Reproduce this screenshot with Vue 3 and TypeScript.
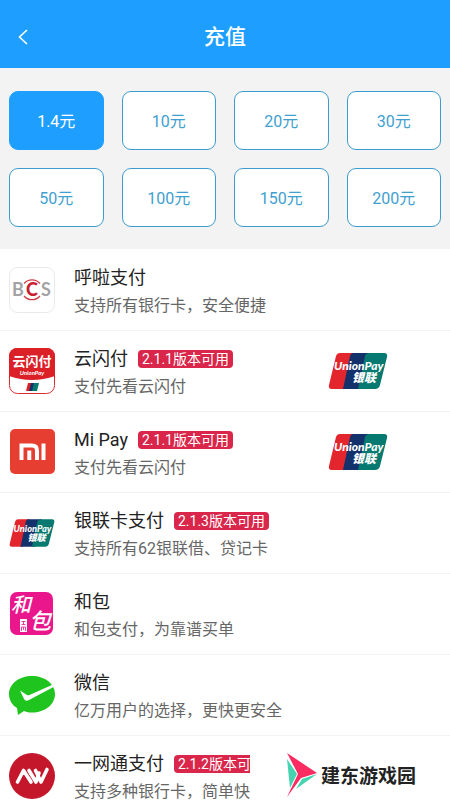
<script setup lang="ts">
import { h, ref } from 'vue'

interface Method {
  id: string
  name: string
  note: string
  badge?: string
  union?: boolean
}

const amounts: string[] = ['1.4', '10', '20', '30', '50', '100', '150', '200']
const selected = ref<string>('1.4')

const methods: Method[] = [
  { id: 'bcs', name: '呼啦支付', note: '支持所有银行卡，安全便捷' },
  { id: 'quick', name: '云闪付', note: '支付先看云闪付', badge: '2.1.1版本可用', union: true },
  { id: 'mi', name: 'Mi Pay', note: '支付先看云闪付', badge: '2.1.1版本可用', union: true },
  { id: 'union', name: '银联卡支付', note: '支持所有62银联借、贷记卡', badge: '2.1.3版本可用' },
  { id: 'hebao', name: '和包', note: '和包支付，为靠谱买单' },
  { id: 'wechat', name: '微信', note: '亿万用户的选择，更快更安全' },
  { id: 'cmb', name: '一网通支付', note: '支持多种银行卡，简单快捷', badge: '2.1.2版本可用' },
]

// Card-network logo, used both as a row icon and as the larger mark on the right.
const UnionLogo = () => {
  const label = { fill: '#fff', 'font-size': 12, 'font-weight': 900, 'font-style': 'italic' }
  return h('svg', { viewBox: '0 0 60 38' }, [
    h('path', { d: 'M12 1h15L18 37H4q-4 0-3-4L8 4q1-3 4-3z', fill: '#e3262d' }),
    h('path', { d: 'M25 1h18L34 37H15L22 4q1-3 3-3z', fill: '#13326b' }),
    h('path', { d: 'M41 1h15q4 0 3 4l-7 28q-1 4-5 4H30l7-33q1-3 4-3z', fill: '#067a70' }),
    h('text', { ...label, x: 6, y: 18, 'font-family': 'Lato, sans-serif' }, 'UnionPay'),
    h('text', { ...label, x: 24, y: 30, 'font-family': "'Noto Sans CJK SC', sans-serif" }, '银联'),
  ])
}
</script>

<template>
  <div class="screen">
    <header class="bar">
      <button class="back" type="button" aria-label="返回">
        <svg width="12" height="18" viewBox="0 0 12 18"><path d="M10 2L2.500 9L10 16" fill="none" stroke="#fff" stroke-width="1.600" /></svg>
      </button>
      <h1>充值</h1>
    </header>

    <section class="amounts">
      <button
        v-for="a in amounts"
        :key="a"
        type="button"
        class="amount"
        :class="{ active: a === selected }"
        @click="selected = a"
      >{{ a }}元</button>
    </section>

    <ul class="methods">
      <li v-for="m in methods" :key="m.id" class="method">
        <svg v-if="m.id === 'bcs'" class="icon" viewBox="0 0 46 46">
          <rect x="0.500" y="0.500" width="45" height="45" rx="8" fill="#fff" stroke="#e9e9e9" />
          <g font-family="Lato, sans-serif" font-weight="900" font-size="18" text-anchor="middle">
            <text x="9" y="29" fill="#a3a3a5" font-weight="700">B</text>
            <text x="23" y="29" fill="#c8202f">C</text>
            <text x="37" y="29" fill="#a3a3a5" font-weight="700">S</text>
          </g>
          <path d="M15 16.500a10.500 10.500 0 0 1 16 0M15 29a10.500 10.500 0 0 0 16 0" fill="none" stroke="#cf3d48" stroke-width="1.300" />
        </svg>
        <svg v-else-if="m.id === 'quick'" class="icon" viewBox="0 0 46 46">
          <rect x="0.500" y="0.500" width="45" height="45" rx="8" fill="#fff" stroke="#d82a30" />
          <path d="M0 8a8 8 0 0 1 8-8h30a8 8 0 0 1 8 8v20Q23 36 0 28z" fill="#dc2027" />
          <text x="23" y="18" fill="#fff" font-size="13" font-weight="700" text-anchor="middle" font-family="'Noto Sans CJK SC', sans-serif">云闪付</text>
          <text x="23" y="27" fill="#fff" font-size="6" font-weight="700" font-style="italic" text-anchor="middle" font-family="Lato, sans-serif">UnionPay</text>
          <path d="M19 35h5l-2 8h-5z" fill="#dc2027" />
          <path d="M22 35h4l-2 8h-4z" fill="#13326b" />
          <path d="M25 35h5l-2 8h-5z" fill="#067a70" />
        </svg>
        <svg v-else-if="m.id === 'mi'" class="icon" viewBox="0 0 46 46">
          <rect x="1" y="0" width="45" height="45" rx="5" fill="#e63e31" />
          <path d="M12.500 31V16.500H23q5 0 5 5V31M20.300 21.500V31M34.500 14.500V31" fill="none" stroke="#fff" stroke-width="4" />
        </svg>
        <UnionLogo v-else-if="m.id === 'union'" class="icon" />
        <svg v-else-if="m.id === 'hebao'" class="icon" viewBox="0 0 46 46">
          <rect x="1" y="1" width="43" height="43" rx="7" fill="#e9168c" />
          <g fill="#fff" font-family="'Noto Sans CJK SC', sans-serif" font-weight="500" font-style="italic">
            <text x="2" y="21" font-size="20">和</text>
            <text x="20" y="38" font-size="22">包</text>
          </g>
          <rect x="11" y="28" width="7" height="13" fill="#fff" />
          <path d="M12.500 30.500h4M14.500 30v3.500M12.500 33.500h4M12.500 40v-4h4v4M14.500 36v3" fill="none" stroke="#e9168c" stroke-width="0.800" />
        </svg>
        <svg v-else-if="m.id === 'wechat'" class="icon" viewBox="0 0 46 46">
          <path d="M23 4C10 4 0 12 0 22c0 6 3 11 8 14l1 7 6-4c3 1 5 1.500 8 1.500 13 0 23-8 23-18.500C46 12 36 4 23 4z" fill="#1fc41f" />
          <path d="M11 18.500L18 23q1 .7 2.500 0L44 12.500l1.500 2L20 28q-3.500 2-5-1z" fill="#fff" />
        </svg>
        <svg v-else class="icon" viewBox="0 0 46 46">
          <circle cx="23" cy="23" r="23" fill="#c4172c" />
          <path d="M8.500 29L14.500 17.500L22 29M20 17.500L27 29L30 20M26.500 17.500L32 29L38 16.500" fill="none" stroke="#fff" stroke-width="3.600" stroke-linejoin="round" stroke-linecap="round" />
        </svg>

        <div class="text">
          <div class="line">
            <span class="name">{{ m.name }}</span>
            <span v-if="m.badge" class="badge">{{ m.badge }}</span>
          </div>
          <p>{{ m.note }}</p>
        </div>
        <UnionLogo v-if="m.union" class="mark" />
      </li>
    </ul>

    <aside class="brand">
      <svg width="32" height="46" viewBox="0 0 32 46" aria-hidden="true">
        <path d="M1 7L11 22L4 36z" fill="#45d3b0" />
        <path d="M1 1L31 21L15 26L1 45L12 22z" fill="#fb2c62" />
        <path d="M31 22L16 27L10 37z" fill="#45d3b0" />
      </svg>
      <span>建东游戏园</span>
    </aside>
  </div>
</template>

<style>
body {
  background: #fff;
}
</style>

<style scoped>
.screen {
  position: relative;
  display: flex;
  flex-direction: column;
  height: 100vh;
  overflow: hidden;
  background: #fff;
  font-family: Roboto, 'Noto Sans CJK SC', sans-serif;
}
.bar {
  display: grid;
  grid-template-columns: 48px 1fr 48px;
  align-items: center;
  flex: none;
  height: 68px;
  padding-top: 5px;
  box-sizing: border-box;
  background: #1e9fff;
  color: #fff;
}
.back {
  display: flex;
  padding: 8px 17px;
  border: 0;
  background: none;
}
h1 {
  margin: 0;
  font-size: 21px;
  line-height: 28px;
  font-weight: 500;
  text-align: center;
}
.amounts {
  display: grid;
  grid-template-columns: repeat(4, 1fr);
  flex: none;
  gap: 18px;
  padding: 23px 9px 22px;
  background: #f3f3f3;
}
.amount {
  height: 59px;
  padding: 0 0 2px;
  border: 1px solid #3c9ccd;
  border-radius: 9px;
  background: #fff;
  color: #3f9fcf;
  font-family: inherit;
  font-size: 16px;
}
.amount.active {
  border-color: #1e9fff;
  background: #1e9fff;
  color: #fff;
}
.methods {
  flex: 1;
  min-height: 0;
  margin: 0;
  padding: 1px 0 0;
  overflow-y: auto;
  scrollbar-width: none;
  list-style: none;
}
.method {
  display: flex;
  align-items: center;
  gap: 19px;
  height: 81px;
  padding: 0 62px 0 9px;
  box-sizing: border-box;
  border-bottom: 1px solid #f3f3f3;
}
.icon {
  flex: none;
  width: 46px;
  height: 46px;
}
.text {
  flex: 1;
  min-width: 0;
  padding-top: 4px;
  white-space: nowrap;
}
.line {
  display: flex;
  align-items: center;
  gap: 10px;
  height: 28px;
}
.name {
  color: #222;
  font-size: 18px;
  line-height: 28px;
}
.badge {
  padding: 0 4px;
  border-radius: 4px;
  background: #d9264a;
  color: #fff;
  font-size: 14px;
  line-height: 18px;
}
p {
  margin: 0;
  color: #666;
  font-size: 16px;
  line-height: 28px;
}
.mark {
  flex: none;
  width: 60px;
  height: 38px;
}
.brand {
  position: absolute;
  right: 0;
  bottom: 0;
  display: flex;
  align-items: center;
  gap: 3px;
  width: 200px;
  height: 51px;
  padding-left: 36px;
  box-sizing: border-box;
  background: #fff;
  color: #222;
  font-size: 19px;
  font-weight: 700;
  white-space: nowrap;
}
</style>
